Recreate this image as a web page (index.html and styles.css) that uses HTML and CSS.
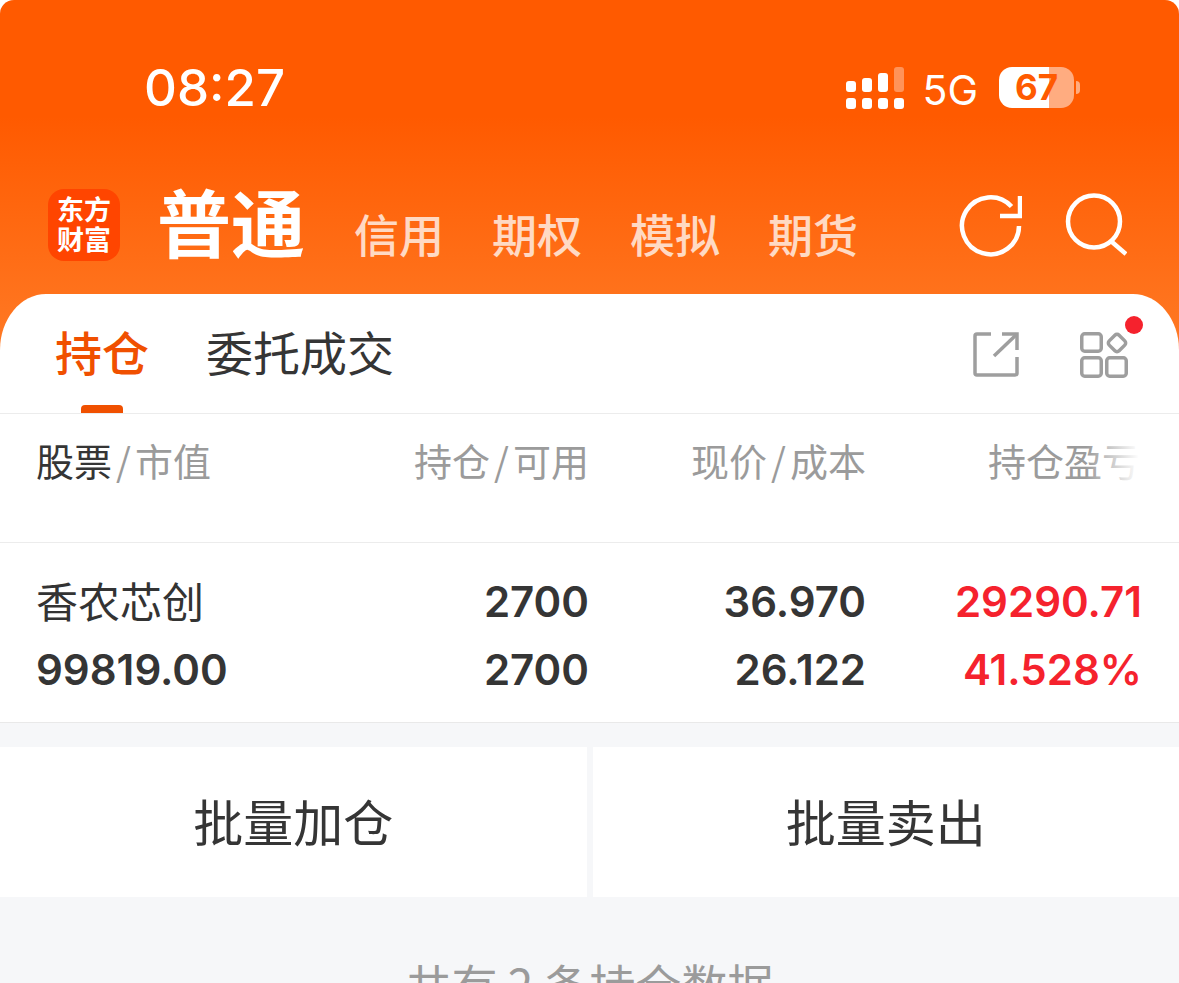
FILE: index.html
```html
<!DOCTYPE html>
<html lang="zh">
<head>
    <meta charset="utf-8">
    <title>持仓</title>
    <link rel="stylesheet" href="styles.css">
</head>
<body>
    <div class="page">
        <!-- Orange header -->
        <header class="top">
            <div class="status">
                <span class="time">08:27</span>
                <div class="status-right">
                    <svg class="signal" width="58" height="42" viewBox="0 0 58 42">
                        <rect x="0" y="14" width="10" height="11" rx="3" fill="#fff"/>
                        <rect x="16" y="11" width="10" height="14" rx="3" fill="#fff"/>
                        <rect x="32" y="6" width="10" height="19" rx="3" fill="#fff"/>
                        <rect x="48" y="0" width="10" height="25" rx="3" fill="#fff" opacity="0.35"/>
                        <rect x="0" y="31" width="10" height="11" rx="3" fill="#fff"/>
                        <rect x="16" y="31" width="10" height="11" rx="3" fill="#fff"/>
                        <rect x="32" y="31" width="10" height="11" rx="3" fill="#fff"/>
                        <rect x="48" y="31" width="10" height="11" rx="3" fill="#fff"/>
                    </svg>
                    <span class="net">5G</span>
                    <div class="battery">
                        <div class="battery-body"><span class="battery-num">67</span></div>
                        <span class="battery-tip"></span>
                    </div>
                </div>
            </div>
            <nav class="nav">
                <div class="logo"><span>东方</span><span>财富</span></div>
                <span class="nav-active">普通</span>
                <div class="nav-links">
                    <a>信用</a>
                    <a>期权</a>
                    <a>模拟</a>
                    <a>期货</a>
                </div>
                <div class="nav-icons">
                    <svg width="64" height="64" viewBox="0 0 64 64" fill="none" stroke="#fff" stroke-width="4.5">
                        <path d="M61 33 A28.5 28.5 0 1 1 53.5 13.5"/>
                        <path d="M42 23 H62 V3"/>
                    </svg>
                    <svg width="64" height="64" viewBox="0 0 64 64" fill="none" stroke="#fff" stroke-width="4.5">
                        <circle cx="31" cy="28.5" r="26"/>
                        <path d="M49 49 L63 61"/>
                    </svg>
                </div>
            </nav>
        </header>

        <!-- White sheet -->
        <section class="sheet">
            <div class="tabs">
                <a class="tab tab-active">持仓</a>
                <a class="tab">委托成交</a>
                <div class="tab-icons">
                    <svg width="46" height="46" viewBox="0 0 46 46" fill="none" stroke="#9e9e9e" stroke-width="3.5">
                        <path d="M18 3 H4 Q2 3 2 5 V42 Q2 44 4 44 H42 Q44 44 44 42 V26"/>
                        <path d="M29 3 H44 V19"/>
                        <path d="M44 3 L21 25"/>
                    </svg>
                    <div class="apps">
                        <svg width="50" height="48" viewBox="0 0 50 48" fill="none" stroke="#9e9e9e" stroke-width="3.5">
                            <rect x="1.75" y="3.75" width="19.5" height="17.5" rx="3"/>
                            <rect x="1.75" y="27.75" width="19.5" height="18.5" rx="3"/>
                            <rect x="26.75" y="27.75" width="19.5" height="18.5" rx="3"/>
                            <rect x="30" y="6" width="14" height="14" rx="3" transform="rotate(45 37 13)"/>
                        </svg>
                        <span class="dot"></span>
                    </div>
                </div>
            </div>

            <div class="thead">
                <div class="col col-name"><b>股票</b><i>/</i>市值</div>
                <div class="col col-num">持仓<i>/</i>可用</div>
                <div class="col col-num col-price">现价<i>/</i>成本</div>
                <div class="col col-profit">持仓盈亏<span class="fade"></span></div>
            </div>

            <div class="row">
                <div class="col col-name">
                    <div class="stock">香农芯创</div>
                    <div class="num">99819.00</div>
                </div>
                <div class="col col-num">
                    <div class="num">2700</div>
                    <div class="num">2700</div>
                </div>
                <div class="col col-num col-price">
                    <div class="num">36.970</div>
                    <div class="num">26.122</div>
                </div>
                <div class="col col-profit red">
                    <div class="num">29290.71</div>
                    <div class="num">41.528%</div>
                </div>
            </div>
        </section>

        <div class="actions">
            <a class="action">批量加仓</a>
            <a class="action">批量卖出</a>
        </div>

        <p class="total">共有 2 条持仓数据</p>
    </div>
</body>
</html>
```
FILE: styles.css
```css
* {
    box-sizing: border-box;
}
html, body {
    margin: 0;
    height: 100%;
    overflow: hidden;
    background: #fff;
}
body {
    font-family: "Noto Sans CJK SC", "Inter", sans-serif;
    color: #333;
}
.page {
    height: 983px;
    overflow: hidden;
    background: #f6f7f9;
    border-radius: 14px 14px 0 0;
}
i {
    font-style: normal;
}

/* header */
.top {
    height: 354px;
    margin-bottom: -60px;
    background: linear-gradient(180deg, #ff5a00 0%, #ff5a00 33%, #ff7a25 100%);
    color: #fff;
}
.status {
    height: 176px;
    padding: 60px 99px 0 144px;
    display: flex;
    justify-content: space-between;
}
.time {
    font-family: "Inter", sans-serif;
    font-size: 51px;
    font-weight: 500;
    line-height: 56px;
}
.status-right {
    display: flex;
    align-items: flex-start;
    padding-top: 7px;
}
.net {
    margin-left: 18px;
    font-family: "Inter", sans-serif;
    font-size: 41px;
    line-height: 46px;
}
.battery {
    margin-left: 21px;
    display: flex;
    align-items: center;
    height: 41px;
}
.battery-body {
    width: 75px;
    height: 41px;
    border-radius: 13px;
    background: linear-gradient(90deg, #fff 0, #fff 50px, #ffac80 50px);
    text-align: center;
}
.battery-num {
    font-family: "Inter", sans-serif;
    font-size: 35px;
    font-weight: 700;
    line-height: 41px;
    color: #ff5a00;
}
.battery-tip {
    width: 4px;
    height: 13px;
    margin-left: 2px;
    border-radius: 0 7px 7px 0;
    background: #ffac80;
}
.nav {
    display: flex;
    align-items: flex-end;
    padding: 0 52px 0 48px;
    height: 88px;
}
.logo {
    width: 72px;
    height: 72px;
    margin-bottom: 3px;
    border-radius: 16px;
    background: #ff4500;
    font-size: 27px;
    font-weight: 700;
    line-height: 30px;
    text-align: center;
    padding-top: 5px;
    display: flex;
    flex-direction: column;
}
.nav-active {
    margin-left: 37px;
    margin-bottom: 2px;
    font-size: 74px;
    font-weight: 700;
    line-height: 84px;
}
.nav-links {
    display: flex;
    gap: 48px;
    margin-left: 49px;
    font-size: 45px;
    font-weight: 500;
    line-height: 60px;
    opacity: 0.75;
}
.nav-icons {
    margin-left: auto;
    display: flex;
    gap: 41px;
    margin-bottom: 7px;
}

/* white sheet */
.sheet {
    position: relative;
    background: #fff;
    border-radius: 46px 46px 0 0 / 56px 56px 0 0;
    border-bottom: 1px solid #e9e9e9;
}
.tabs {
    height: 120px;
    display: flex;
    align-items: center;
    padding: 0 49px 6px 55px;
    gap: 57px;
    border-bottom: 1px solid #ececec;
}
.tab {
    position: relative;
    font-size: 47px;
    line-height: 62px;
    color: #353535;
}
.tab-active {
    color: #f05000;
    font-weight: 500;
}
.tab-active::after {
    content: "";
    position: absolute;
    left: 26px;
    right: 26px;
    bottom: -31px;
    height: 8px;
    border-radius: 4px 4px 0 0;
    background: #f05000;
}
.tab-icons {
    margin-left: auto;
    display: flex;
    align-items: center;
    gap: 61px;
    margin-top: 6px;
}
.apps {
    position: relative;
    height: 48px;
}
.dot {
    position: absolute;
    top: -14px;
    right: -13px;
    width: 18px;
    height: 18px;
    border-radius: 50%;
    background: #f5222d;
}
.thead, .row {
    display: flex;
    padding: 0 37px 0 36px;
}
.thead {
    height: 129px;
    padding-top: 19px;
    font-size: 38px;
    line-height: 54px;
    color: #9b9b9b;
    border-bottom: 1px solid #ececec;
}
.thead b {
    font-weight: 400;
    color: #353535;
}
.thead i {
    margin: 0 4px;
}
.row {
    height: 179px;
    padding-top: 25px;
}
.col-name {
    width: 302px;
}
.col-num {
    width: 251px;
    text-align: right;
}
.col-price {
    width: 277px;
}
.col-profit {
    position: relative;
    flex: 1;
    text-align: right;
    white-space: nowrap;
}
.thead .col-profit {
    padding-right: 2px;
}
.fade {
    position: absolute;
    top: 0;
    right: 0;
    bottom: 0;
    width: 56px;
    background: linear-gradient(90deg, rgba(255, 255, 255, 0), #fff 95%);
}
.stock {
    margin: -2px 0 2px;
    font-size: 42px;
    line-height: 68px;
}
.num {
    font-family: "Inter", sans-serif;
    font-size: 42px;
    font-weight: 600;
    line-height: 68px;
    color: #353535;
}
.red .num {
    color: #f5222d;
}

/* bottom */
.actions {
    display: flex;
    gap: 6px;
    margin-top: 24px;
}
.action {
    flex: 1;
    height: 150px;
    background: #fff;
    font-size: 50px;
    line-height: 146px;
    text-align: center;
    color: #353535;
}
.total {
    margin: 55px 0 0;
    font-size: 46px;
    line-height: 62px;
    text-align: center;
    color: #9b9b9b;
}
```
